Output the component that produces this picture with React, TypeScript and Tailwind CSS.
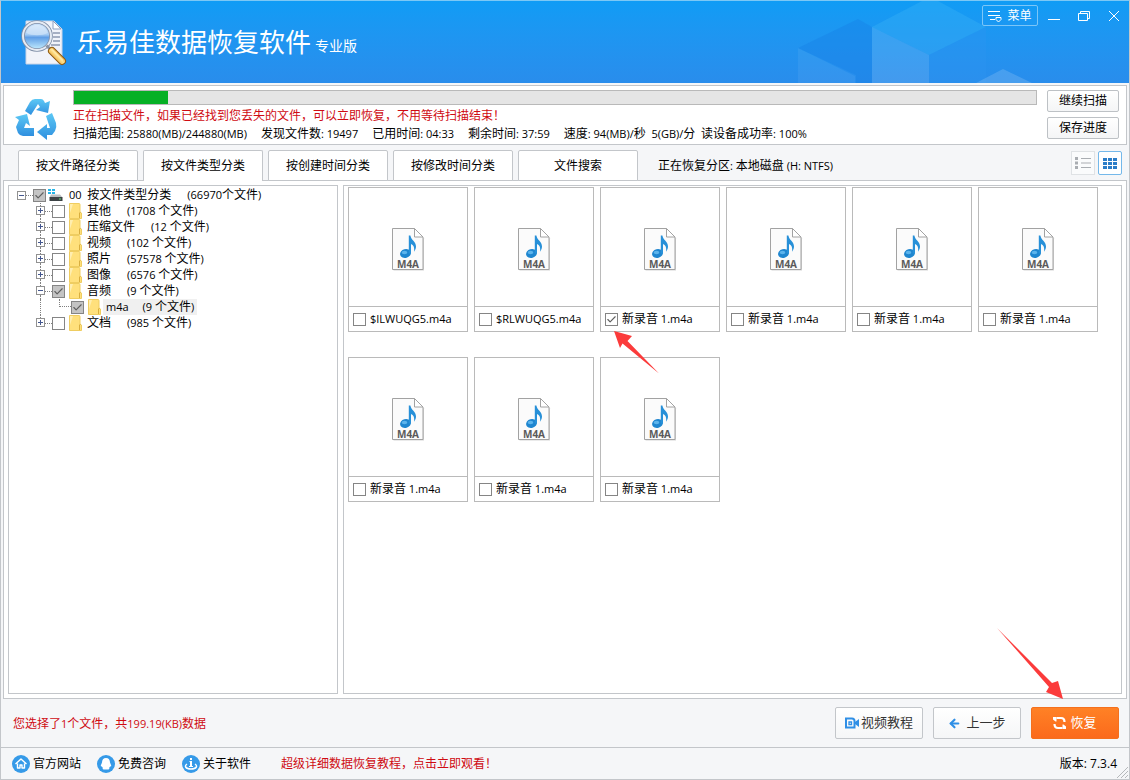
import React from 'react';
import { ArrowLeft, Check } from 'lucide-react';

interface TreeNode {
  label: string;
  count: string;
  checked?: boolean;
  open?: boolean;
  child?: { label: string; count: string };
}

const nodes: TreeNode[] = [
  { label: '其他', count: '(1708 个文件)' },
  { label: '压缩文件', count: '(12 个文件)' },
  { label: '视频', count: '(102 个文件)' },
  { label: '照片', count: '(57578 个文件)' },
  { label: '图像', count: '(6576 个文件)' },
  { label: '音频', count: '(9 个文件)', checked: true, open: true, child: { label: 'm4a', count: '(9 个文件)' } },
  { label: '文档', count: '(985 个文件)' },
];

const files = [
  { name: '$ILWUQG5.m4a' },
  { name: '$RLWUQG5.m4a' },
  { name: '新录音 1.m4a', checked: true },
  { name: '新录音 1.m4a' },
  { name: '新录音 1.m4a' },
  { name: '新录音 1.m4a' },
  { name: '新录音 1.m4a' },
  { name: '新录音 1.m4a' },
  { name: '新录音 1.m4a' },
];

const tabs = ['按文件路径分类', '按文件类型分类', '按创建时间分类', '按修改时间分类', '文件搜索'];

const stats = [
  '扫描范围: 25880(MB)/244880(MB)',
  '发现文件数: 19497',
  '已用时间: 04:33',
  '剩余时间: 37:59',
  '速度: 94(MB)/秒  5(GB)/分  读设备成功率: 100%',
];

// Latin runs are set one pixel smaller than the Chinese around them
const Mixed = ({ text }: { text: string }) => (
  <span className="whitespace-pre">
    {text.split(/([\x20-\x7e]+)/).map((part, i) =>
      i % 2 ? <span key={i} className="text-[11px]">{part}</span> : part
    )}
  </span>
);

const Box = ({ checked, filled }: { checked?: boolean; filled?: boolean }) => (
  <span className="relative block w-[13px] h-[13px] shrink-0">
    <input
      type="checkbox"
      defaultChecked={checked}
      className={`peer block appearance-none w-[13px] h-[13px] border border-[#858585] ${filled ? 'bg-[#c4c4c4]' : 'bg-white'}`}
    />
    <Check size={11} strokeWidth={2.5} className="absolute left-px top-px hidden peer-checked:block text-[#606060] pointer-events-none" />
  </span>
);

const Expander = ({ open }: { open?: boolean }) => (
  <svg width="9" height="9" viewBox="0 0 9 9" className="block shrink-0" shapeRendering="crispEdges">
    <rect x="0.5" y="0.5" width="8" height="8" fill="#fff" stroke="#919191" />
    <path d={open ? 'M2 4.5h5' : 'M2 4.5h5M4.5 2v5'} stroke="#44578f" />
  </svg>
);

const Folder = () => (
  <svg width="13" height="16" viewBox="0 0 13 16" className="shrink-0">
    <path d="M.5.5h9.5q1 0 1 1V9l1.5 1v5.5H.5z" fill="#ffe07c" stroke="#efcd61" />
    <path d="M1 1h3L1 10z" fill="#ffeeb0" />
    <path d="M10.5 15V10l1-1" fill="none" stroke="#d9ae3e" />
  </svg>
);

const Drive = () => (
  <svg width="15" height="14" viewBox="0 0 15 14" className="shrink-0">
    <path d="M0 1h3v2H0zM4 1h3v2H4zM0 4h3v2H0zM4 4h3v2H4z" fill="#25b5e8" />
    <path d="M3 6.5h9l2.5 3h-13z" fill="#b9bec0" />
    <rect x="1.5" y="9" width="13" height="4" fill="#3c4245" />
    <rect x="11" y="10.5" width="2" height="1" fill="#5fe07b" />
  </svg>
);

const M4aIcon = () => (
  <svg width="34" height="44" viewBox="0 0 34 44">
    <path d="M2.5 2.5h22l8.500 9v32H2.500z" fill="#999" opacity=".4" />
    <path d="M1.500 1.500h22l8.500 8.500v32.500H1.500z" fill="#fbfbfb" stroke="#a2a2a2" />
    <path d="M23.500 1.500V10h8.500z" fill="#fff" stroke="#a2a2a2" />
    <ellipse cx="14.500" cy="26.500" rx="5.500" ry="4.300" fill="#1f86cf" transform="rotate(-15 14.500 26.500)" />
    <path d="M17.800 8.500h1.600c.6 4.500 5.600 6 5.600 11 0 2-.8 3.800-2 5.300.8-4.300-.6-7-3-7.800v9.500h-2.200z" fill="#2790d8" />
    <ellipse cx="13.500" cy="25.500" rx="2.800" ry="1.800" fill="#5cb4ec" />
    <text x="17" y="41" textAnchor="middle" fontSize="10" fontWeight="700" fill="#5a5a5a" fontFamily="Open Sans, sans-serif">M4A</text>
  </svg>
);

const Logo = () => (
  <svg width="46" height="48" viewBox="0 0 46 48" className="mt-[2px] shrink-0">
    <defs>
      <linearGradient id="lens" x1="0" y1="0" x2="0" y2="1">
        <stop offset="0" stopColor="#cfe4fa" />
        <stop offset=".45" stopColor="#a4cbf3" />
        <stop offset=".55" stopColor="#5f9ee6" />
        <stop offset="1" stopColor="#c8f0ff" />
      </linearGradient>
      <linearGradient id="handle" x1="0" y1="1" x2="1" y2="0">
        <stop offset="0" stopColor="#e08a12" />
        <stop offset=".5" stopColor="#ffe08a" />
        <stop offset="1" stopColor="#d07a0c" />
      </linearGradient>
    </defs>
    <path d="M5 2h28l8 8v35H5z" fill="#f1f3fa" stroke="#c9d3e6" />
    <path d="M32 2v8h8z" fill="#fff" stroke="#8e9fc0" />
    <path d="M32 14h7M32 18h7M32 22h7M30 26h9" stroke="#5d6d8c" strokeWidth="1.200" />
    <circle cx="16" cy="17" r="14" fill="url(#lens)" stroke="#7e8da6" strokeWidth="3.600" />
    <circle cx="16" cy="17" r="14" fill="none" stroke="#e6ebf3" strokeWidth="2" />
    <path d="M5 14c2-6 6-8 11-8s9 2 11 8c-7 3-15 3-22 0z" fill="#fff" opacity=".35" />
    <path d="M25.500 26.500l4 4" stroke="#8793a6" strokeWidth="3" />
    <path d="M31 32l10 10" stroke="#8e5a10" strokeWidth="8" strokeLinecap="round" />
    <path d="M31 32l10 10" stroke="url(#handle)" strokeWidth="6" strokeLinecap="round" />
    <path d="M31 30.500l10.500 10.500" stroke="#ffe9a8" strokeWidth="1.500" strokeLinecap="round" />
  </svg>
);

const RecycleMark = () => (
  <svg width="43" height="42" viewBox="0 0 43 42" className="shrink-0">
    <defs>
      <linearGradient id="recycle" x1="0" y1="0" x2="0" y2="1">
        <stop offset="0" stopColor="#5cc8f5" />
        <stop offset="1" stopColor="#2f8fdf" />
      </linearGradient>
    </defs>
    <g fill="url(#recycle)">
      <path d="M11 13L16 4Q18 1 21 1H27Q29 1 30 3L31 5L36 3L34 15L22 12L26 9L24 6L17 17Z" />
      <path d="M32 18L38 15L42 25Q43 29 41 33L38 37H33V42L23 34L33 26V30H36Z" />
      <path d="M1 19L13 16L16 28L12 25L10 30H20V38H9Q6 38 4 35L2 29L5 22Z" />
    </g>
  </svg>
);

const VideoIcon = () => (
  <svg width="14" height="12" viewBox="0 0 14 12" fill="none" stroke="#2f8fe6">
    <path d="M1 1.500h6q2.500 0 2.500 2.500v6.500H1z" strokeWidth="2" />
    <path d="M4 5h2.500v2.500H4z" strokeWidth="1.300" />
    <path d="M10 5l4-3v8l-4-3z" fill="#2f8fe6" stroke="none" />
  </svg>
);

const RestoreIcon = () => (
  <svg width="13" height="14" viewBox="0 0 13 14" fill="none" stroke="#fff" strokeWidth="2.200">
    <path d="M3.500 2H8q3.500 0 3.500 4" />
    <path d="M9.500 12H5q-3.500 0-3.500-4" />
    <path d="M0 1h3.500v4.500H2.500L0 3.500zM13 13H9.500V8.500h1L13 10.500z" fill="#fff" stroke="none" />
  </svg>
);

const footerLinks = [
  {
    label: '官方网站',
    icon: <path d="M3.500 9L9 4l5.500 5M5.500 8.500V13H8v-3h2v3h2.500V8.500" fill="none" stroke="#fff" strokeWidth="1.400" strokeLinejoin="round" />,
  },
  {
    label: '免费咨询',
    icon: <path d="M9 3c2.700 0 4 2 4 4.500l1.200 3c.2 1-.4 1.300-1 .8-.3.900-.7 1.300-1.200 1.700 1 .8 0 1.500-1.300 1.500H7.300C6 14.500 5 13.800 6 13c-.5-.4-.9-.8-1.200-1.700-.6.5-1.200.2-1-.8l1.200-3C5 5 6.300 3 9 3z" fill="#fff" />,
  },
  {
    label: '关于软件',
    icon: (
      <>
        <path d="M8 3h2v2H8zM7.500 6H10v5h1v1H7v-1h1V7h-.500z" fill="#fff" />
        <path d="M5 9c-3 2-1.500 5 4 5s7-3 4-5" fill="none" stroke="#fff" strokeWidth="1.500" />
      </>
    ),
  },
];

const Header = () => (
  <header className="relative flex items-center h-[82px] pl-5 bg-linear-to-b from-[#109cf5] to-[#298dec] text-white">
    <svg width="262" height="82" viewBox="0 0 262 82" className="absolute right-[69px] top-0">
      <path d="M0 47L60 18l14 8v56H58V74z" fill="#1680e6" opacity=".4" />
      <path d="M0 47l57 28v7H0z" fill="#fff" opacity=".06" />
      <path d="M74 26L124 0h16l48 26-57 28z" fill="#3cb5f5" opacity=".35" />
      <path d="M74 26l57 28v28H74z" fill="#fff" opacity=".12" />
      <path d="M188 26v56h-57V54z" fill="#2f95f0" opacity=".35" />
      <path d="M178 82l27-14 29 14z" fill="#fff" opacity=".15" />
    </svg>
    <Logo />
    <h1 className="ml-[10px] text-[26px] leading-8">乐易佳数据恢复软件</h1>
    <span className="ml-1 mt-2 text-sm">专业版</span>
    <div className="absolute right-[9px] top-1 flex items-center gap-4">
      <button className="flex items-center justify-center gap-1 w-14 h-[21px] border border-[#7cc6f8] rounded-xs text-[12px]">
        <svg width="15" height="14" viewBox="0 0 15 14" fill="none" stroke="#fff">
          <path d="M0 2.500h12M0 6.500h12M2 10.500h5" />
          <path d="M8 8.500h5v2l-2.500 2.500L8 10.500z" />
        </svg>
        菜单
      </button>
      <div className="flex items-center gap-[18px]">
        <button aria-label="最小化" className="-ml-[6px]">
          <svg width="12" height="12" viewBox="0 0 12 12" stroke="#fff"><path d="M0 9.500h12" /></svg>
        </button>
        <button aria-label="还原">
          <svg width="12" height="12" viewBox="0 0 12 12" fill="none" stroke="#fff">
            <path d="M.5 3.500h9v7h-9zM2.500 3V1.500h9v7H10" />
          </svg>
        </button>
        <button aria-label="关闭">
          <svg width="12" height="12" viewBox="0 0 12 12" stroke="#fff"><path d="M1 1l10 10M11 1L1 11" /></svg>
        </button>
      </div>
    </div>
  </header>
);

const ScanPanel = () => (
  <section className="flex mt-[2px] mx-[2px] h-[60px] pt-1 pl-[10px] pr-[7px] border border-[#c3c6ca] bg-white">
    <div className="pt-2">
      <RecycleMark />
    </div>
    <div className="flex-1 ml-4 mr-[10px] min-w-0">
      <div role="progressbar" aria-valuenow={10} className="h-[15px] border border-[#b9b9b9] bg-[#e5e5e5]">
        <div className="h-full bg-[#06b025]" style={{ width: '9.8%' }} />
      </div>
      <p className="leading-[18px] pt-[2px] text-[#cf0b12]">正在扫描文件，如果已经找到您丢失的文件，可以立即恢复，不用等待扫描结束！</p>
      <p className="flex gap-[14px] leading-[18px]">
        {stats.map((s) => <Mixed key={s} text={s} />)}
      </p>
    </div>
    <div className="flex flex-col gap-[5px]">
      {['继续扫描', '保存进度'].map((t) => (
        <button key={t} className="w-[72px] h-[22px] border border-[#bdc1c5] rounded-xs bg-linear-to-b from-white to-[#f4f5f6]">{t}</button>
      ))}
    </div>
  </section>
);

const TabRow = () => (
  <nav className="flex items-end mt-[5px] ml-[17px] mr-[7px] h-[31px]">
    <div className="flex gap-[5px]">
      {tabs.map((t, i) => (
        <button
          key={t}
          className={`relative w-[120px] h-[31px] border border-[#c3c6ca] rounded-t-xs bg-white ${i === 1 ? 'border-b-0 z-10' : ''}`}
        >
          {t}
        </button>
      ))}
    </div>
    <p className="ml-5 self-center"><Mixed text="正在恢复分区: 本地磁盘 (H: NTFS)" /></p>
    <div className="flex gap-[3px] ml-auto self-start mt-px">
      <button aria-label="列表" className="flex items-center justify-center w-6 h-6 border border-[#dfe2e5] bg-[#fafbfc]">
        <svg width="16" height="12" viewBox="0 0 16 12" fill="#a9adb2">
          <path d="M0 0h3v3H0zM0 4.500h3v3H0zM0 9h3v3H0zM6 1h10v1H6zM6 5.500h10v1H6zM6 10h10v1H6z" />
        </svg>
      </button>
      <button aria-label="缩略图" className="flex items-center justify-center w-6 h-6 border border-[#74b8ea] rounded-xs bg-white">
        <svg width="14" height="11" viewBox="0 0 14 11" fill="#2b7dc8">
          <path d="M0 0h4v3H0zM5 0h4v3H5zM10 0h4v3h-4zM0 4h4v3H0zM5 4h4v3H5zM10 4h4v3h-4zM0 8h4v3H0zM5 8h4v3H5zM10 8h4v3h-4z" />
        </svg>
      </button>
    </div>
  </nav>
);

const Tree = () => (
  <aside className="w-[330px] pt-px pl-2 border border-[#c3c6ca] bg-white shrink-0 leading-4">
    <label className="flex items-center h-4">
      <Expander open />
      <span className="w-[7px] border-t border-dotted border-[#808080]" />
      <Box checked filled />
      <span className="w-[2px]" />
      <Drive />
      <span className="w-[6px]" />
      <Mixed text="00  按文件类型分类" />
      <span className="ml-4"><Mixed text="(66970个文件)" /></span>
    </label>
    <ul className="pl-[19px]">
      {nodes.map((n, i) => (
        <li key={n.label}>
          <label className="flex items-center h-4">
            <span className="flex flex-col items-center w-[9px] h-4">
              <span className="h-[3px] border-l border-dotted border-[#808080]" />
              <Expander open={n.open} />
              {i < nodes.length - 1 && <span className="h-1 border-l border-dotted border-[#808080]" />}
            </span>
            <span className="w-[7px] border-t border-dotted border-[#808080]" />
            <Box checked={n.checked} filled={n.checked} />
            <span className="w-1" />
            <Folder />
            <span className="ml-[5px]">{n.label}</span>
            <span className="ml-4"><Mixed text={n.count} /></span>
          </label>
          {n.child && (
            <label className="flex items-center h-4 pl-1">
              <span className="w-[19px] h-4 border-l border-dotted border-[#808080]" />
              <span className="self-start w-3 h-2 border-l border-b border-dotted border-[#808080]" />
              <Box checked filled />
              <span className="w-1" />
              <Folder />
              <span className="flex ml-[2px] px-[3px] bg-[#f0f0f0]">
                <Mixed text={n.child.label} />
                <span className="ml-[14px]"><Mixed text={n.child.count} /></span>
              </span>
            </label>
          )}
        </li>
      ))}
    </ul>
  </aside>
);

const FileGrid = () => (
  <section className="flex-1 pt-px pl-1 border border-[#c3c6ca] bg-white">
    <div className="grid grid-cols-[repeat(auto-fill,120px)] gap-x-[6px] gap-y-[25px]">
      {files.map((f, i) => (
        <label key={i} className={`relative block border border-[#bababa] bg-white ${f.checked ? 'z-10' : ''}`}>
          <span className="flex items-center justify-center h-[119px] pt-1 border-b border-[#bababa]">
            <M4aIcon />
          </span>
          <span className="flex items-center gap-1 h-6 pl-1">
            <Box checked={f.checked} />
            <Mixed text={f.name} />
          </span>
          {f.checked && (
            <svg width="46" height="43" viewBox="0 0 46 43" className="absolute left-[13px] top-[143px]">
              <path d="M0 0L18 5 13.500 10 45 42.500 8.500 12.500 6 17z" fill="#fb3b3b" />
            </svg>
          )}
        </label>
      ))}
    </div>
  </section>
);

const ActionBar = () => (
  <div className="flex items-center h-12 pl-3 pr-[10px]">
    <p className="pt-[2px] text-[#cf0b12]"><Mixed text="您选择了1个文件，共199.19(KB)数据" /></p>
    <div className="flex gap-[10px] ml-auto text-[13px] text-[#333]">
      <button className="flex items-center justify-center gap-[2px] w-[88px] h-8 border border-[#c3c6ca] rounded-xs bg-linear-to-b from-white to-[#f5f6f7]">
        <VideoIcon />
        视频教程
      </button>
      <button className="flex items-center justify-center gap-[5px] w-[88px] h-8 border border-[#c3c6ca] rounded-xs bg-linear-to-b from-white to-[#f5f6f7]">
        <ArrowLeft size={13} strokeWidth={4} className="text-[#2f8fe6]" />
        上一步
      </button>
      <button className="relative flex items-center justify-center gap-1 w-[88px] h-8 rounded-xs border border-[#f4701d] bg-linear-to-b from-[#ff8125] to-[#fb6a1c] text-white">
        <RestoreIcon />
        恢复
        <svg width="68" height="72" viewBox="0 0 68 72" className="absolute -left-[36px] -top-[80px]">
          <path d="M1 0L56 55 62 53 67 71 50 64 53 59z" fill="#fb3b3b" />
        </svg>
      </button>
    </div>
  </div>
);

const Footer = () => (
  <footer className="relative flex items-center h-8 pl-[11px] pr-3 border-t border-[#c3c6ca]">
    <div className="flex gap-4">
      {footerLinks.map((l) => (
        <a key={l.label} href="#" className="flex items-center gap-[3px]">
          <svg width="18" height="18" viewBox="0 0 18 18">
            <circle cx="9" cy="9" r="9" fill="#369ae8" />
            {l.icon}
          </svg>
          {l.label}
        </a>
      ))}
    </div>
    <a href="#" className="ml-[30px] text-[#cf0b12]">超级详细数据恢复教程，点击立即观看！</a>
    <span className="ml-auto">版本: 7.3.4</span>
    <svg width="11" height="11" viewBox="0 0 11 11" stroke="#b5b8bb" className="absolute right-px bottom-px">
      <path d="M0 11L11 0M4 11l7-7M8 11l3-3" />
    </svg>
  </footer>
);

export default function App() {
  return (
    <div className="flex flex-col min-h-screen border border-[#c3c6ca] border-t-[#7cc8f5] bg-[#f5f6f8] text-[12px] text-black font-['Open_Sans','Noto_Sans_CJK_SC',sans-serif]">
      <Header />
      <ScanPanel />
      <TabRow />
      <main className="flex flex-1 gap-[5px] -mt-px mx-[2px] p-1 border border-[#c3c6ca] bg-white">
        <Tree />
        <FileGrid />
      </main>
      <ActionBar />
      <Footer />
    </div>
  );
}
